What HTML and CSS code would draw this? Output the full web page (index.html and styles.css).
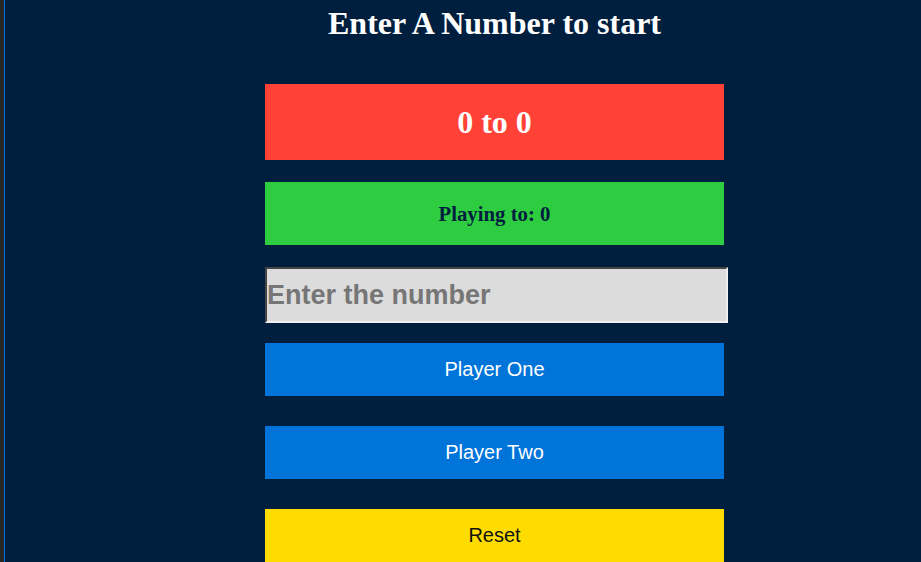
FILE: index.html
```html
<!DOCTYPE html>
<html lang="en">
<head>
<meta charset="utf-8">
<title>Score Keeper</title>
<link rel="stylesheet" href="styles.css">
</head>
<body>
<div class="page">
  <main class="game">
    <h1 class="title">Enter A Number to start</h1>
    <h1 class="score">0 to 0</h1>
    <h3 class="target">Playing to: 0</h3>
    <input class="number" type="number" placeholder="Enter the number">
    <button class="btn btn-p1">Player One</button>
    <button class="btn btn-p2">Player Two</button>
    <button class="btn btn-reset">Reset</button>
  </main>
</div>
</body>
</html>
```

FILE: styles.css
```css
html, body {
  margin: 0;
  padding: 0;
  background: #262626;
  height: 100%;
  overflow: hidden;
}

.page {
  margin-left: 4px;
  border-left: 1px solid #0074d9;
  background: #001f3f;
  min-height: 100vh;
  font-family: "Liberation Serif", "Times New Roman", serif;
}

.game {
  width: 459px;
  margin-left: 260px;
  display: flex;
  flex-direction: column;
  padding-top: 5px;
}

.title {
  margin: 0;
  font-size: 32px;
  line-height: 36px;
  font-weight: bold;
  color: #ffffff;
  text-align: center;
  white-space: nowrap;
}

.score {
  margin: 43px 0 0;
  height: 76px;
  display: flex;
  align-items: center;
  justify-content: center;
  background: #ff4136;
  color: #ffffff;
  font-size: 32px;
  font-weight: bold;
}

.target {
  margin: 22px 0 0;
  height: 63px;
  display: flex;
  align-items: center;
  justify-content: center;
  background: #2ecc40;
  color: #001f3f;
  font-size: 20.8px;
  font-weight: bold;
}

.number {
  margin: 22px 0 0;
  width: 459px;
  height: 52px;
  box-sizing: content-box;
  padding: 0;
  border: 2px inset #ffffff;
  border-top-color: #999999;
  border-left-color: #999999;
  border-bottom-color: #f0f0f0;
  border-right-color: #f0f0f0;
  background: #dcdcdc;
  font-family: "Liberation Sans", Arial, sans-serif;
  font-size: 27px;
  font-weight: bold;
  color: #333;
  outline: none;
}

.number::placeholder {
  color: #767676;
  opacity: 1;
}

.btn {
  height: 53px;
  border: none;
  padding: 0;
  font-family: "Liberation Sans", Arial, sans-serif;
  font-size: 20px;
  cursor: pointer;
}

.btn-p1 {
  margin-top: 20px;
  background: #0074d9;
  color: #ffffff;
}

.btn-p2 {
  margin-top: 30px;
  background: #0074d9;
  color: #ffffff;
}

.btn-reset {
  margin-top: 30px;
  background: #ffdc00;
  color: #111111;
}
```
